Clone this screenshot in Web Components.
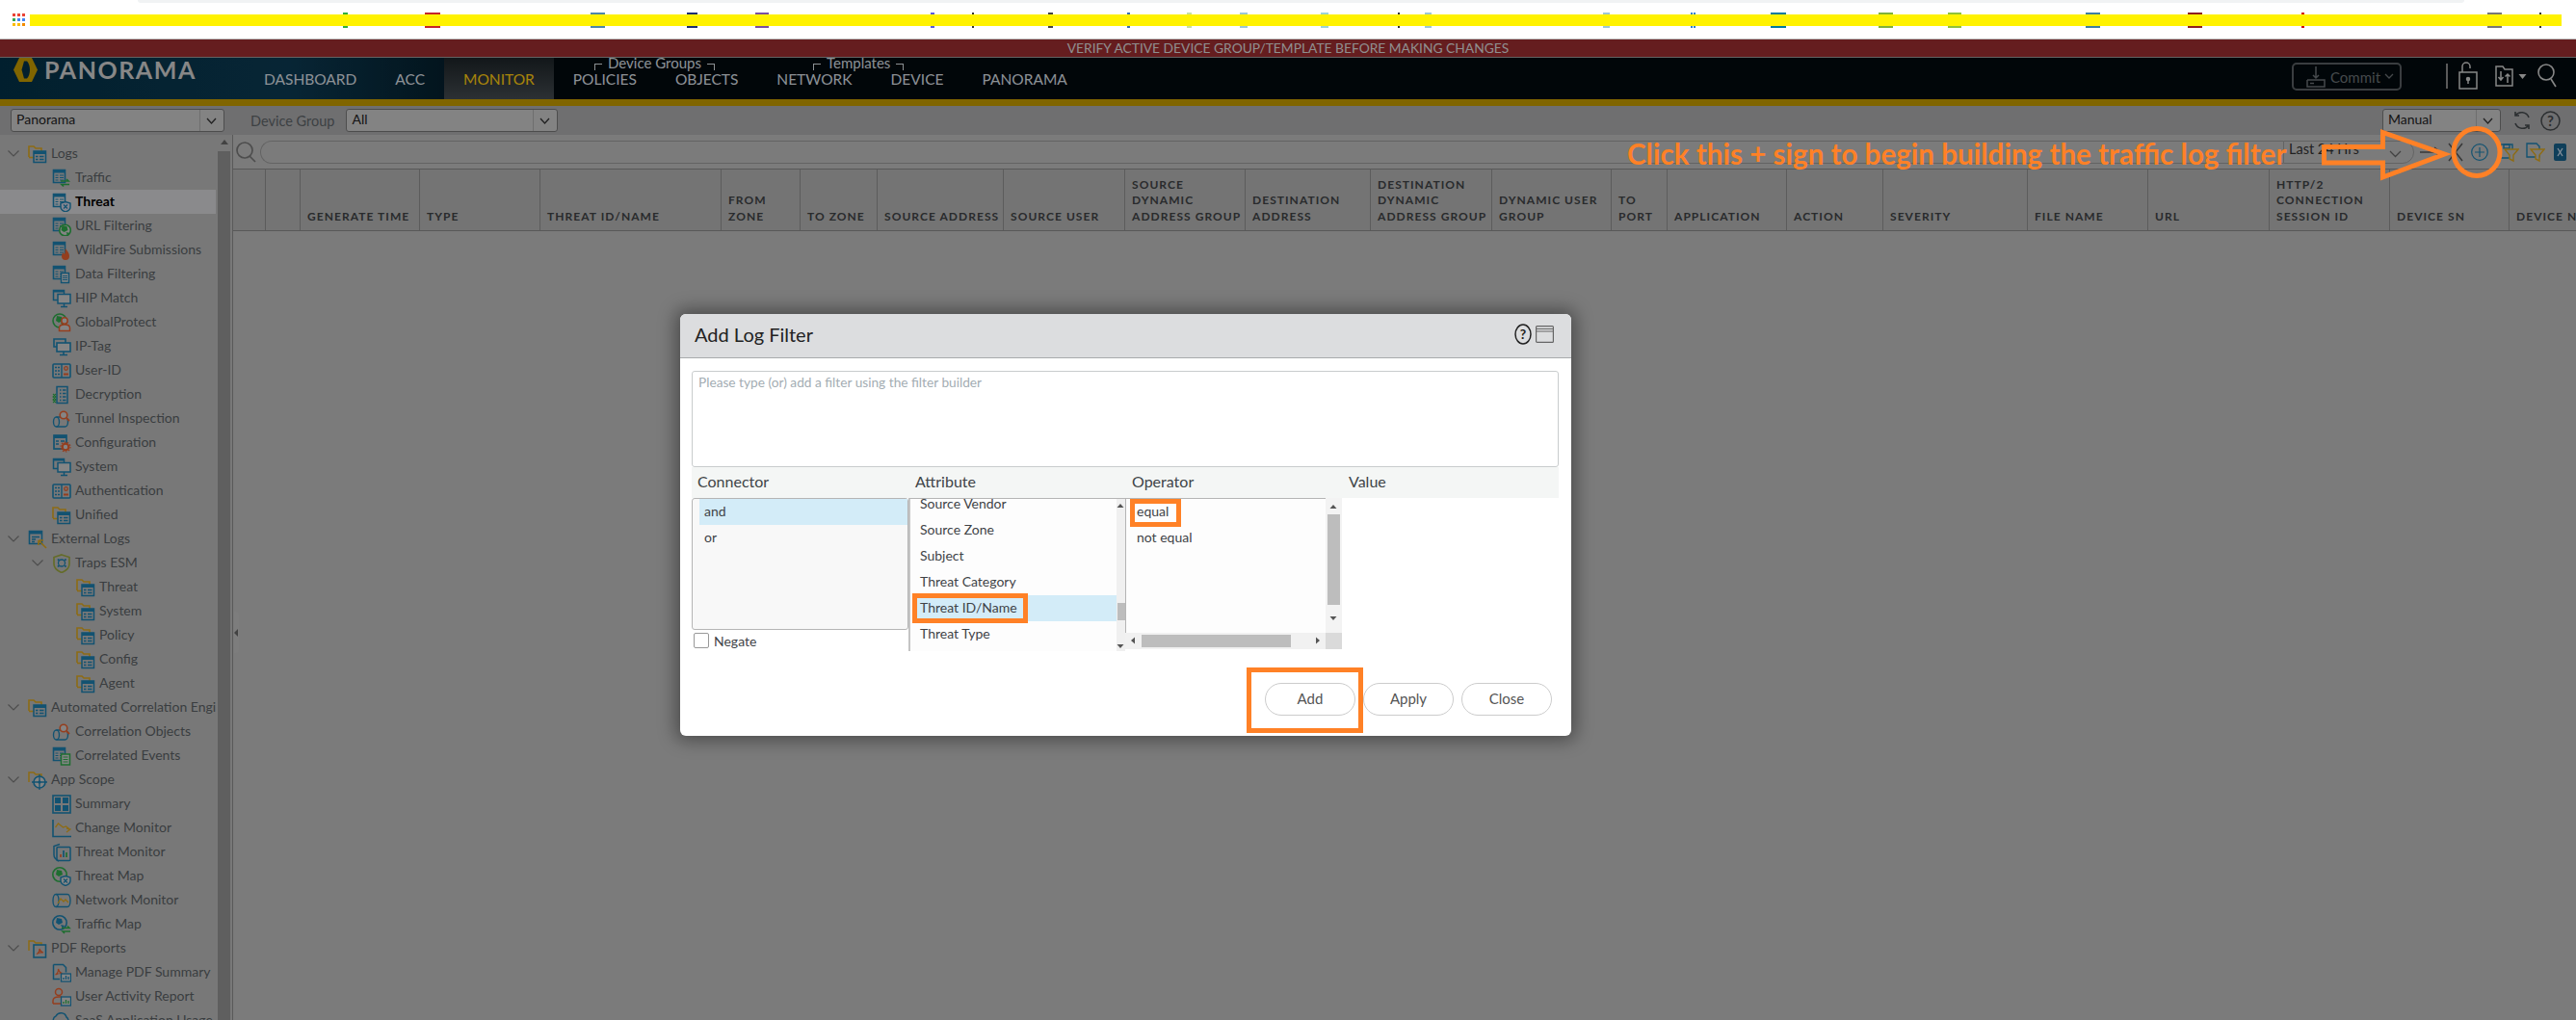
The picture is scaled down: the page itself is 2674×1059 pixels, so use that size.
<!DOCTYPE html>
<html lang="en"><head><meta charset="utf-8"><title>Panorama</title>
<style>
html,body{margin:0;padding:0;height:100%;overflow:hidden;background:#fff;font-family:Lato,"Liberation Sans",sans-serif}
pan-app{display:block;width:2674px;height:1059px}
</style></head><body>
<pan-app></pan-app>
<script>
const B='#1d7fae',G='#d9a520',GR='#2fa84a',O='#e4602f',D='#14516f';
const doc=`<path d="M1.5 1.5h12v13h-12z" fill="none" stroke="${B}" stroke-width="1.6"/><path d="M1.5 1.5h12v3h-12z" fill="${B}"/><path d="M3.5 7h3M3.5 9.500h3M3.500 12h3M8 7h4M8 9.500h4M8 12h4" stroke="${B}" stroke-width="1.200"/>`;
const folder=`<path d="M1 13V2h5l2 2h6v3" fill="none" stroke="${G}" stroke-width="1.600"/><path d="M1 13.500h5" stroke="${G}" stroke-width="1.600"/><rect x="6" y="7" width="12.500" height="11.500" fill="none" stroke="${B}" stroke-width="1.500"/><path d="M6 7h12.500v3H6z" fill="${B}"/><path d="M8 12.500h2.500M8 15.500h2.500M12 12.500h4.500M12 15.500h4.500" stroke="${B}" stroke-width="1.300"/>`;
const monitors=`<path d="M1.500 1.500h11v10h-11z" fill="none" stroke="${B}" stroke-width="1.500"/><path d="M1.500 1.500h11v2h-11z" fill="${B}"/><rect x="6" y="5.500" width="13" height="9.500" fill="#ccc" stroke="${B}" stroke-width="1.500"/><path d="M12.500 15v3M9 18.500h7" stroke="${B}" stroke-width="1.500"/>`;
const cyl=`<ellipse cx="4.500" cy="13" rx="3" ry="5" fill="none" stroke="${B}" stroke-width="1.400"/><path d="M4.500 8h9a3 5 0 0 1 0 10h-9" fill="none" stroke="${B}" stroke-width="1.400"/>`;
const mag=`<circle cx="12" cy="6" r="3.800" fill="#ccc" stroke="${O}" stroke-width="1.600"/><path d="M15 9l3 3" stroke="${O}" stroke-width="1.800"/>`;
const globe=(c,x=8,y=8,r=7)=>`<circle cx="${x}" cy="${y}" r="${r}" fill="none" stroke="${c}" stroke-width="1.600"/><path d="M${x-3} ${y-5}l5 1 1 4-4 2-3-2zM${x+1} ${y+2}l4 1-2 3z" fill="${c}"/>`;
const ICONS={
traffic:doc+`<path d="M9 13h8l-2-2M18 16.500h-8l2 2" fill="none" stroke="${GR}" stroke-width="1.700"/>`,
threat:doc+`<path d="M9 11l5-1.500 5 1.500v4c0 2-2 4-5 5-3-1-5-3-5-5z" fill="#ccd" stroke="${B}" stroke-width="1.400"/><path d="M12 12.500l4 4M16 12.500l-4 4" stroke="${B}" stroke-width="1.200"/>`,
url:doc+globe(GR,13.500,14,5.800).replace('fill="none"','fill="#ccc"'),
wild:doc+`<path d="M14 8c1 2 4 4 4 8a4 4 0 0 1-8 0c0-2 1-3 2-4 0 1 .5 2 1 2 1-2 0-4 1-6z" fill="${O}"/>`,
data:doc+`<path d="M9.500 8.500h8v10h-8z" fill="#ccc" stroke="${B}" stroke-width="1.400"/><path d="M11 11.500h5M11 13.500h5M11 15.500h5" stroke="${B}" stroke-width="1.100"/>`,
hip:monitors,ip:`<path d="M2 2h12v8H2z" fill="none" stroke="${B}" stroke-width="1.600"/><rect x="5" y="6" width="14" height="9" fill="#ccc" stroke="${B}" stroke-width="1.600"/><path d="M12 15v3M8 18.500h8" stroke="${B}" stroke-width="1.600"/>`,
gp:globe(GR,8,8,7)+`<circle cx="13" cy="8" r="3.200" fill="#ccc" stroke="${O}" stroke-width="1.500"/><path d="M7.500 18.500v-3c0-2 2-3.500 5.500-3.500s5.500 1.500 5.500 3.500v3z" fill="#ccc" stroke="${O}" stroke-width="1.500"/>`,
user:`<rect x="1" y="3" width="18" height="14" rx="1" fill="none" stroke="${B}" stroke-width="1.600"/><path d="M10 3v14" stroke="${B}" stroke-width="1.400"/><path d="M3 6.500h2M6 6.500h2M3 10h2M6 10h2M3 13.500h2M6 13.500h2" stroke="${B}" stroke-width="1.500"/><circle cx="14.500" cy="7.500" r="1.800" fill="none" stroke="${O}" stroke-width="1.300"/><path d="M12 14.500v-2h5v2z" fill="${O}"/>`,
dec:`<path d="M5 1.500h11v17H5z" fill="none" stroke="${B}" stroke-width="1.500"/><path d="M8 5h1.500M11 5h3.500M8 8.500h1.500M11 8.500h3.500M8 12h1.500M11 12h3.500M8 15.500h1.500M11 15.500h3.500" stroke="${B}" stroke-width="1.300"/><path d="M1 9l3 3-3 3 3 3M4 9l-3 3 3 3-3 3" fill="none" stroke="${GR}" stroke-width="1.100"/>`,
tunnel:cyl+mag,
conf:`<rect x="2" y="2" width="13" height="14" fill="none" stroke="${B}" stroke-width="1.700"/><path d="M2 2h13v3H2z" fill="${B}"/><path d="M4 8h3M4 11h3M9 8h4" stroke="${B}" stroke-width="1.300"/><circle cx="14" cy="14" r="3.300" fill="#ccc" stroke="${O}" stroke-width="2.200"/><circle cx="14" cy="14" r="5" fill="none" stroke="${O}" stroke-width="1.200" stroke-dasharray="1.500 1.600"/>`,
ext:`<path d="M1.500 1.500h13v13h-13z" fill="none" stroke="${B}" stroke-width="1.600"/><path d="M1.500 1.500h13v3h-13z" fill="${B}"/><path d="M4 7.500h8M4 10h4M4 12.500h3" stroke="${B}" stroke-width="1.300"/><path d="M19 19l-8-8M11 11v5M11 11h5" fill="none" stroke="${G}" stroke-width="1.700"/>`,
traps:`<path d="M10 1l8 2.500v7c0 4-3 7-8 9-5-2-8-5-8-9v-7z" fill="none" stroke="#9aa640" stroke-width="1.700"/><path d="M6.500 7v-1h1M13 6h1v1M14 12v1h-1M7.500 13h-1v-1" fill="none" stroke="${B}" stroke-width="1.500"/><circle cx="10" cy="9.500" r="3.500" fill="none" stroke="${B}" stroke-width="1.300"/>`,
folder,
corrd:doc+`<path d="M9.500 8h9v11h-9z" fill="#ccc" stroke="${GR}" stroke-width="1.500"/><path d="M11.500 11h5M11.500 13.500h5M11.500 16h5" stroke="${GR}" stroke-width="1.100"/>`,
scope:`<path d="M1 12V2h5l2 2h6v2" fill="none" stroke="${G}" stroke-width="1.500"/><circle cx="12" cy="12" r="6" fill="#ccc" stroke="${B}" stroke-width="1.600"/><path d="M12 4v16M4 12h16" stroke="${B}" stroke-width="1.300"/><circle cx="12" cy="12" r="1.600" fill="${B}"/>`,
summary:`<rect x="1" y="1" width="18" height="18" fill="none" stroke="${B}" stroke-width="1.600"/><path d="M3 3h6v6H3zM11 3h6v6h-6zM3 11h6v6H3zM11 11h6v6h-6z" fill="${B}"/>`,
change:`<path d="M1 1v17.500h19" fill="none" stroke="${B}" stroke-width="1.600"/><path d="M3.500 9l3-4 5 4 3-1 4 3M15 14l4-3-4-1" fill="none" stroke="${G}" stroke-width="1.300"/>`,
tmon:`<path d="M8 1.500l-6 2v9c0 3 2 5 5 6.500" fill="none" stroke="${B}" stroke-width="1.500"/><rect x="5" y="4.500" width="14" height="14" rx="1" fill="none" stroke="${B}" stroke-width="1.500"/><path d="M9 15v-3" stroke="${O}" stroke-width="1.700"/><path d="M12 15V8" stroke="${B}" stroke-width="1.700"/><path d="M15 15v-5" stroke="${GR}" stroke-width="1.700"/>`,
tmap:globe(GR,8,8,7.200)+`<path d="M9 11l5-1.500 5 1.500v3.500c0 2-2 4-5 5-3-1-5-3-5-5z" fill="#ccc" stroke="${B}" stroke-width="1.400"/><path d="M12 12.500l4 4M16 12.500l-4 4" stroke="${B}" stroke-width="1.200"/>`,
nmon:`<ellipse cx="4" cy="10" rx="3" ry="6.500" fill="none" stroke="${B}" stroke-width="1.400"/><path d="M4 3.500h12a3 6.500 0 0 1 0 13H4" fill="none" stroke="${B}" stroke-width="1.400"/><path d="M6 13l3-5 3 3 2-2 3 3" fill="none" stroke="${G}" stroke-width="1.300"/>`,
tfmap:globe(B,8,8,7.200)+`<path d="M10 13.500h8l-2-2M19 17h-8l2 2" fill="none" stroke="${GR}" stroke-width="1.600"/>`,
pdf:`<path d="M1 12V2h5l2 2h6v2" fill="none" stroke="${G}" stroke-width="1.500"/><rect x="6" y="6" width="12.500" height="13" fill="none" stroke="${B}" stroke-width="1.600"/><path d="M9 15.500c2-1 3-3.500 3-5.500 .5 2 1.500 3.500 4 4-2-.2-5 .3-7 1.500z" fill="none" stroke="${O}" stroke-width="1.200"/>`,
mpdf:`<path d="M1.500 1.500h10l3 3v5M1.500 1.500v15H8" fill="none" stroke="${B}" stroke-width="1.500"/><path d="M3.500 12c2-1 3-3 3-6 .5 2 1.500 4 4 4.500-2 0-5 .5-7 1.500z" fill="none" stroke="${O}" stroke-width="1.200"/><rect x="9.500" y="11" width="10" height="8" fill="#ccc" stroke="${B}" stroke-width="1.300"/><path d="M12 17v-2M14.500 17v-4M17 17v-3" stroke="${B}" stroke-width="1.300"/>`,
uar:`<circle cx="7" cy="5" r="3.500" fill="none" stroke="${O}" stroke-width="1.500"/><path d="M1 17v-3c0-2 2-4 6-4h3" fill="none" stroke="${O}" stroke-width="1.500"/><path d="M1 17h8" stroke="${O}" stroke-width="1.500"/><rect x="9.500" y="10" width="10" height="9" fill="#ccc" stroke="${B}" stroke-width="1.300"/><path d="M12 17v-2M14.500 17v-4M17 17v-3" stroke="${GR}" stroke-width="1.300"/>`,
saas:`<path d="M3 12a4 4 0 0 1 1-7 6 6 0 0 1 11 1 4 4 0 0 1 1 6z" fill="none" stroke="${B}" stroke-width="1.500"/>`
};
class PanIcon extends HTMLElement{constructor(){super();const s=this.attachShadow({mode:'open'});
 s.innerHTML=`<style>:host{display:inline-block;width:20px;height:20px;flex:none}svg{display:block;width:100%;height:100%}</style><svg viewBox="0 0 20 20">${ICONS[this.getAttribute('name')]||''}</svg>`}}
customElements.define('pan-icon',PanIcon);

class PanBookmarks extends HTMLElement{constructor(){super();const s=this.attachShadow({mode:'open'});
 const bits=[[356,5,'#2fae3f'],[441,16,'#c4262a'],[613,15,'#4d86a8'],[713,11,'#1d2f6f'],[784,14,'#7a4fa0'],[966,4,'#5a5ae0'],[1009,2,'#333'],[1088,5,'#444'],[1170,3,'#3a6fb0'],[1232,5,'#c6e0a0'],[1287,8,'#9cc7d5'],[1371,8,'#9cd3d5'],[1451,2,'#333'],[1479,7,'#9cc7d5'],[1664,7,'#9cc7d5'],[1755,2,'#2b7fd0'],[1758,2,'#2b7fd0'],[1838,16,'#007a9c'],[1950,15,'#7fb13a'],[2022,14,'#8fc13a'],[2165,15,'#3e7ea0'],[2271,15,'#8e2020'],[2389,3,'#d01010'],[2582,15,'#777'],[2636,2,'#333']];
 let x=0,h='';for(const [l,w,c] of bits){h+=`<i style="margin-left:${l-x}px;width:${w}px;background:${c}"></i>`;x=l+w}
 s.innerHTML=`<style>
 :host{display:block;height:41px;background:#fff;box-sizing:border-box;border-bottom:1px solid #bdbdbd;position:relative}
 .top{height:3px;margin:0 116px 0 143px;background:#f1f3f4;border-radius:0 0 6px 6px}
 .bits{display:flex;position:absolute;left:0;top:13px;height:16px}.bits i{display:block;height:16px;flex:none}
 .bar{position:absolute;left:31px;top:15px;width:2628px;height:12px;background:#fff200}
 .apps{position:absolute;left:13px;top:14px;display:grid;grid-template-columns:repeat(3,3px);gap:2px}
 .apps b{width:3px;height:3px;display:block}
 </style><div class="top"></div><div class="bits">${h}</div><div class="bar"></div>
 <div class="apps">${['#ea4335','#ea4335','#ea4335','#34a853','#4285f4','#4285f4','#fbbc05','#fbbc05','#f28b00'].map(c=>`<b style="background:${c}"></b>`).join('')}</div>`}}
customElements.define('pan-bookmarks',PanBookmarks);

class PanNav extends HTMLElement{constructor(){super();const s=this.attachShadow({mode:'open'});
 const tabs=['DASHBOARD','ACC','MONITOR','POLICIES','OBJECTS','NETWORK','DEVICE','PANORAMA'];
 s.innerHTML=`<style>
 :host{display:block;color:#d8dfe4;font-family:Lato,sans-serif}
 .banner{height:18px;background:#9c2d31;color:#dcdcdc;text-align:center;font-size:13.800px;line-height:18px;box-sizing:border-box}
 .sep{height:1px;background:#999}
 .row{height:43px;display:flex;background:linear-gradient(90deg,#033147 0,#0c3a52 300px,#05202e 461px,#020a0e 575px,#020a0e);position:relative}
 .logo{width:254px;display:flex;gap:7px;padding-left:14px;box-sizing:border-box;align-items:flex-start}
 .logo svg{flex:none}
 .logo span{font-weight:700;font-size:25px;letter-spacing:1.550px;line-height:24px;color:#cfcfcf;margin-top:0}
 .tab{padding:0 20px;font-size:15.500px;line-height:44px;letter-spacing:0;position:relative}
 .tab.on{color:#ffcb10;background:linear-gradient(#1d2428,#444b50)}
 .grp{position:absolute;top:-1px;font-size:15px;line-height:13px;white-space:nowrap;color:#d8dfe4}
 .grp i{display:inline-block;width:7px;height:6px;border:1px solid #d8dfe4;border-width:1px 0 0 1px;vertical-align:-2px;margin-right:6px}
 .grp i.r{border-width:1px 1px 0 0;margin:0 0 0 6px}
 .spacer{flex:1}
 .commit{width:114px;height:29px;margin:5px 46px 0 0;border:2px solid #5a5f63;border-radius:5px;box-sizing:border-box;display:flex;align-items:center;gap:4px;padding-left:12px;color:#6b7175;font-size:15px}
 .tools{display:flex;align-items:center;height:38px;margin-right:20px;gap:0}
 .gold{height:7px;background:#c59b00}
 svg.i{display:block}
 </style>
 <div class="banner"><span>VERIFY ACTIVE DEVICE GROUP/TEMPLATE BEFORE MAKING CHANGES</span></div><div class="sep"></div>
 <div class="row">
  <div class="logo"><svg width="25" height="25" viewBox="0 0 25 25"><path fill-rule="evenodd" d="M6 0h13l6 12.500-6 12.500H6L0 12.500zM11 3.500l-2.500 9 2.500 9h3c2-2 3-5.500 3-9s-1-7-3-9z" fill="#c59b00"/></svg><span>PANORAMA</span></div>
  ${tabs.map(t=>`<div class="tab${t==='MONITOR'?' on':''}">${t}</div>`).join('')}
  <div class="grp" style="left:617px"><i></i>Device Groups<i class="r"></i></div>
  <div class="grp" style="left:844px"><i></i>Templates<i class="r"></i></div>
  <div class="spacer"></div>
  <div class="commit"><svg class="i" width="22" height="24" viewBox="0 0 22 24" fill="none" stroke="#6b7175" stroke-width="1.500"><path d="M11 1v12M8 10l3 3 3-3M2 15h7M13 15h7M2 15v7h18v-7H2M5 18.500h4"/></svg><span>Commit</span><svg class="i" width="10" height="7" viewBox="0 0 10 7" fill="none" stroke="#6b7175" stroke-width="1.300"><path d="M1 1l4 4 4-4"/></svg></div>
  <div class="tools">
   <svg class="i" width="2" height="26"><rect width="2" height="26" fill="#8a8a8a"/></svg>
   <svg class="i" style="margin-left:11px" width="20" height="30" viewBox="0 0 20 30" fill="none" stroke="#cfcfcf" stroke-width="1.500"><path d="M4 11V5a4 4 0 0 1 8 0v2"/><path d="M1 11h18v17H1z"/><circle cx="10" cy="18" r="1.500" fill="#cfcfcf"/><path d="M10 19v4"/></svg>
   <svg class="i" style="margin-left:18px" width="19" height="24" viewBox="0 0 19 24" fill="none" stroke="#cfcfcf" stroke-width="1.500"><path d="M1 2h7l2 3h8v17H1z"/><path d="M6 16V7M3.500 13L6 16l2.500-3M13 10v9M10.500 12.500L13 10l2.500 2.500"/></svg>
   <svg class="i" style="margin-left:5px" width="9" height="7" viewBox="0 0 9 7"><path d="M.5 1h8L4.500 6z" fill="#cfcfcf"/></svg>
   <svg class="i" style="margin-left:11px" width="20" height="28" viewBox="0 0 20 28" fill="none" stroke="#cfcfcf" stroke-width="1.600"><circle cx="9" cy="10" r="8"/><path d="M14 17l5 8"/></svg>
  </div>
 </div><div class="gold"></div>`}}
customElements.define('pan-nav',PanNav);

class PanSelect extends HTMLElement{constructor(){super();const s=this.attachShadow({mode:'open'});
 const w=this.getAttribute('w');s.innerHTML=`<style>
 :host{display:block;width:${w}px;height:24px;box-sizing:border-box;border:1px solid #777;border-radius:3px;background:#c9c9ca;font-size:14px;line-height:20px;color:#222;padding-left:5px;position:relative}
 i{position:absolute;right:0;top:0;bottom:0;width:24px;border-left:1px solid #aaa}
 svg{position:absolute;right:7px;top:8px}
 </style><span><slot></slot></span><i></i><svg width="11" height="8" viewBox="0 0 11 8" fill="none" stroke="#333" stroke-width="1.300"><path d="M1 1l4.500 5L10 1"/></svg>`}}
customElements.define('pan-select',PanSelect);

class PanToolbar extends HTMLElement{constructor(){super();const s=this.attachShadow({mode:'open'});
 s.innerHTML=`<style>
 :host{display:flex;align-items:center;height:30px;background:#ababad;padding:0 0 0 11px;box-sizing:border-box;font-size:14.500px;color:#5e6468;flex:none}
 .l{margin:0 12px 0 27px}.s{flex:1}
 svg{display:block}
 </style><pan-select w="222">Panorama</pan-select><span class="l">Device Group</span><pan-select w="220">All</pan-select><div class="s"></div>
 <pan-select w="123">Manual</pan-select>
 <svg style="margin-left:12px" width="20" height="22" viewBox="0 0 20 22" fill="none" stroke="#44494c" stroke-width="1.600"><path d="M17 8A8 8 0 0 0 3 6M3 2v4h4M3 14a8 8 0 0 0 14 2M17 20v-4h-4"/></svg>
 <svg style="margin:0 16px 0 9px" width="21" height="21" viewBox="0 0 21 21"><circle cx="10.500" cy="10.500" r="9.500" fill="none" stroke="#44494c" stroke-width="1.500"/><text x="10.500" y="16" text-anchor="middle" font-family="Lato" font-weight="700" font-size="15" fill="#44494c">?</text></svg>`}}
customElements.define('pan-toolbar',PanToolbar);

class PanTreeRow extends HTMLElement{constructor(){super();const s=this.attachShadow({mode:'open'});
 const lv=+this.getAttribute('lv')||0,open=this.hasAttribute('open'),sel=this.hasAttribute('sel');
 s.innerHTML=`<style>
 :host{display:flex;align-items:center;height:25px;flex:none;padding-left:${lv*25}px;font-size:14px;color:${sel?'#000':'#5a5f63'};font-weight:${sel?700:400};background:${sel?'#d4d5d7':'transparent'};white-space:nowrap;overflow:hidden}
 .c{width:29px;flex:none;padding-left:8px;box-sizing:border-box}
 svg{display:block}pan-icon{margin-right:4px}
 span{position:relative;top:-1px}
 </style><div class="c">${open?'<svg width="12" height="7" viewBox="0 0 12 7" fill="none" stroke="#777" stroke-width="1.200"><path d="M.5.5L6 6 11.500.5"/></svg>':''}</div><pan-icon name="${this.getAttribute('i')}"></pan-icon><span><slot></slot></span>`}}
customElements.define('pan-tree-row',PanTreeRow);

class PanTree extends HTMLElement{constructor(){super();const s=this.attachShadow({mode:'open'});
 s.innerHTML=`<style>
 :host{display:flex;width:242px;flex:none;background:#b9b9b9;box-sizing:border-box;border-right:1px solid #8a8a8a;overflow:hidden}
 .list{width:224px;flex:none;padding-top:7px;display:flex;flex-direction:column;overflow:hidden}
 .sb{width:13px;margin-left:2px;flex:none;position:relative;padding-top:17px;box-sizing:border-box}
 .sb i{display:block;height:100%;background:#929292}
 .sb b{position:absolute;left:3px;top:5px;border:4px solid transparent;border-top:0;border-bottom:5px solid #666}
 </style><div class="list"><slot></slot></div><div class="sb"><b></b><i></i></div>`}}
customElements.define('pan-tree',PanTree);

class PanGrid extends HTMLElement{constructor(){super();const s=this.attachShadow({mode:'open'});
 const cols=[[34,''],[36,''],[124,'GENERATE TIME'],[125,'TYPE'],[188,'THREAT ID/NAME'],[82,'FROM|ZONE'],[80,'TO ZONE'],[131,'SOURCE ADDRESS'],[126,'SOURCE USER'],[125,'SOURCE|DYNAMIC|ADDRESS GROUP'],[130,'DESTINATION|ADDRESS'],[126,'DESTINATION|DYNAMIC|ADDRESS GROUP'],[124,'DYNAMIC USER|GROUP'],[58,'TO|PORT'],[124,'APPLICATION'],[100,'ACTION'],[150,'SEVERITY'],[125,'FILE NAME'],[126,'URL'],[125,'HTTP/2|CONNECTION|SESSION ID'],[124,'DEVICE SN'],[125,'DEVICE NAME']];
 s.innerHTML=`<style>
 :host{flex:1;min-width:0;display:flex;flex-direction:column;background:#bdbdbd;overflow:hidden;position:relative}
 .search{height:35px;display:flex;align-items:center;padding-left:3px;flex:none;background:#bebebe}
 .inp{width:2100px;margin-left:3px;height:24px;box-sizing:border-box;border:1px solid #999;border-right:0;border-radius:12px 0 0 12px;flex:none}
 .rng{width:136px;height:24px;box-sizing:border-box;border:1px solid #999;border-left:1px solid #999;border-radius:0 12px 12px 0;font-size:14.500px;line-height:16px;padding-left:5px;color:#333;position:relative;flex:none}
 .rng svg{position:absolute;right:12px;top:9px}
 svg{display:block;flex:none}
 .head{display:flex;height:65px;flex:none;border-top:1px solid #888;border-bottom:1px solid #888;box-sizing:border-box;background:#b2b2b2;width:2600px}
 .c{flex:none;box-sizing:border-box;border-right:1px solid #8e8e8e;padding:0 0 6px 7px;display:flex;align-items:flex-end;font-size:12px;line-height:16.500px;font-weight:700;letter-spacing:1.050px;color:#3f4245;white-space:nowrap}
 .c:last-child{border-right:0}
 .handle{position:absolute;left:1px;top:495px;width:5px;height:43px;background:#c0c0c0;border-radius:0 3px 3px 0}
 .handle i{position:absolute;left:0;top:18px;border:4px solid transparent;border-left:0;border-right:4px solid #666}
 </style>
 <div class="search"><svg width="22" height="24" viewBox="0 0 22 24" fill="none" stroke="#777" stroke-width="1.700"><circle cx="9" cy="10" r="8"/><path d="M14 16l6 6"/></svg><div class="inp"></div><div class="rng">Last 24 Hrs<svg width="13" height="8" viewBox="0 0 13 8" fill="none" stroke="#666" stroke-width="1.300"><path d="M1 1l5.500 5.500L12 1"/></svg></div>
  <svg style="margin-left:6px" width="22" height="12" viewBox="0 0 22 12" fill="none" stroke="#555" stroke-width="1.500"><path d="M0 6h21M15 1l6 5-6 5"/></svg>
  <svg style="margin-left:7px" width="16" height="20" viewBox="0 0 16 20" fill="none" stroke="#555" stroke-width="1.500"><path d="M1 1l14 18M15 1L1 19"/></svg>
  <svg style="margin-left:8px" width="18" height="18" viewBox="0 0 18 18" fill="none" stroke="#1d7fae" stroke-width="1.200"><circle cx="9" cy="9" r="8.300"/><path d="M9 4v10M4 9h10"/></svg>
  <svg style="margin-left:12px" width="20" height="22" viewBox="0 0 20 22" fill="none" stroke-width="1.400"><path d="M1 3h12v14H1z" stroke="#1d7fae"/><path d="M4 3h6v4H4z" stroke="#1d7fae"/><path d="M5 8h14l-5 6v6l-4-2v-4z" stroke="#d9a520" fill="#bebebe"/></svg>
  <svg style="margin-left:7px" width="20" height="22" viewBox="0 0 20 22" fill="none" stroke-width="1.400"><path d="M1 2h10l3 3v11H1z" stroke="#1d7fae"/><path d="M5 8h14l-5 6v6l-4-2v-4z" stroke="#d9a520" fill="#bebebe"/></svg>
  <svg style="margin-left:9px" width="13" height="18" viewBox="0 0 13 18"><rect width="13" height="18" rx="2" fill="#17618a"/><path d="M4 5l5 8M9 5l-5 8" stroke="#cde" stroke-width="1.300"/></svg>
 </div>
 <div class="head">${cols.map(([w,t])=>`<div class="c" style="width:${w}px"><div>${t.split('|').join('<br>')}</div></div>`).join('')}</div>
 <div class="handle"><i></i></div>`}}
customElements.define('pan-grid',PanGrid);

class PanList extends HTMLElement{constructor(){super();const s=this.attachShadow({mode:'open'});
 s.innerHTML=`<style>:host{display:block}
 .r{height:27px;line-height:26px;font-size:14px;color:#3f4347;padding-left:${this.getAttribute('pl')||5}px;box-sizing:border-box}
 .r.on{background:#d3ecf8}
 </style>${(this.getAttribute('items')||'').split('|').map((t,i)=>`<div class="r${i==+this.getAttribute('on')?' on':''}">${t}</div>`).join('')}`}}
customElements.define('pan-list',PanList);

class PanDialog extends HTMLElement{constructor(){super();const s=this.attachShadow({mode:'open'});
 const tri=(d,st)=>`<svg style="position:absolute;${st}" width="8" height="8" viewBox="0 0 8 8"><path d="${d}" fill="#555"/></svg>`;
 const UP='M4 2l3.500 4H.5z',DN='M.5 2h7L4 6z',LF='M2 4l4-3.500v7z',RT='M6 4L2 .5v7z';
 s.innerHTML=`<style>
 :host{position:absolute;left:706px;top:285px;width:925px;height:438px;background:#fff;border-radius:6px;box-shadow:0 0 18px 5px rgba(0,0,0,.38);font-family:Lato,sans-serif;display:block;overflow:hidden;color:#3f4347}
 .h{height:46px;background:#dcdddf;border-bottom:1px solid #a8aaad;box-sizing:border-box;display:flex;align-items:center;padding:0 18px 3px 15px;font-size:20px;color:#222}
 .h span{flex:1}svg{display:block}
 .b{padding:13px 13px 0 12px}
 .ta{height:100px;box-sizing:border-box;border:1px solid #c9cccd;border-radius:3px;font-size:13.700px;line-height:18px;color:#a3adb3;padding:2px 6px}
 .cols{display:grid;grid-template-columns:repeat(4,225px);height:32px;background:#f4f6f5;font-size:16px;line-height:29px;color:#404447}
 .cols div{padding-left:6px}.cols div+div{padding-left:7px}
 .lists{display:flex;height:159px;font-size:14px}
 .col{width:225px;flex:none;box-sizing:border-box;position:relative;overflow:hidden}
 .conn{height:137px;background:#f8f8f8;border:1px solid #b5b5b5;border-radius:3px;padding-left:7px;box-sizing:border-box}
 .neg{display:flex;align-items:center;height:22px;gap:5px;padding-left:2px;font-size:14px}
 .neg i{width:16px;height:16px;border:1px solid #999;border-radius:2px;box-sizing:border-box}
 .attr{border-left:2px solid #c4c4c4;border-top:1px solid #b5b5b5;background:#fdfdfd;padding-left:5px;display:flex}
 .attr .in{flex:1;margin-top:-8px;overflow:hidden}
 .attr .bar{width:9px;background:#f0f0f0;position:relative;flex:none}
 .attr .bar b{position:absolute;left:1px;right:0;top:108px;height:18px;background:#bdbdbd}
 .op{display:flex;flex-direction:column}
 .op .top{display:flex;height:140px;flex:none}
 .op .in{flex:1;border-left:1px solid #b5b5b5;border-top:1px solid #b5b5b5;background:#fdfdfd;padding-left:6px;box-sizing:border-box}
 .vb{width:17px;background:#f3f3f3;position:relative;padding:17px 2px 29px;box-sizing:border-box}
 .vb b{display:block;height:94px;background:#bdbdbd}
 .hb{height:17px;display:flex;background:#f1f1f1;padding-left:17px;box-sizing:border-box;position:relative}
 .hb b{width:155px;height:13px;margin-top:2px;background:#bdbdbd}.hb u{margin-left:auto;width:17px;background:#dadada}
 .btns{display:flex;justify-content:flex-end;gap:8px;margin-top:33px;padding-right:7px}
 .btn{width:94px;height:34px;border:1px solid #ccc;border-radius:17px;box-sizing:border-box;text-align:center;font-size:15px;line-height:31px;color:#555}
 </style>
 <div class="h"><span>Add Log Filter</span>
  <svg width="18" height="22" viewBox="0 0 18 22"><ellipse cx="9" cy="11" rx="8" ry="10" fill="none" stroke="#222" stroke-width="1.500"/><text x="9" y="16" text-anchor="middle" font-family="Lato" font-weight="700" font-size="14" fill="#222">?</text></svg>
  <svg style="margin-left:4px" width="19" height="18" viewBox="0 0 19 18" fill="none" stroke="#666" stroke-width="1.200"><rect x=".6" y=".6" width="17.800" height="16.800" rx="1"/><path d="M1 3.500h17M1 6h17"/></svg></div>
 <div class="b"><div class="ta">Please type (or) add a filter using the filter builder</div>
 <div class="cols"><div>Connector</div><div>Attribute</div><div>Operator</div><div>Value</div></div>
 <div class="lists">
  <div class="col"><div class="conn"><pan-list pl="5" items="and|or" on="0"></pan-list></div><div class="neg"><i></i>Negate</div></div>
  <div class="col attr"><div class="in"><pan-list pl="5" on="4" items="Source Vendor|Source Zone|Subject|Threat Category|Threat ID/Name|Threat Type"></pan-list></div><div class="bar"><b></b>${tri(UP,'left:0;top:3px')}${tri(DN,'left:0;bottom:1px')}</div></div>
  <div class="col op"><div class="top"><div class="in"><pan-list pl="5" items="equal|not equal" on="9"></pan-list></div><div class="vb"><b></b>${tri(UP,'left:4px;top:5px')}${tri(DN,'left:4px;bottom:11px')}</div></div><div class="hb"><b></b><u></u>${tri(LF,'left:4px;top:4px')}${tri(RT,'right:21px;top:4px')}</div></div>
 </div>
 <div class="btns"><div class="btn">Add</div><div class="btn">Apply</div><div class="btn">Close</div></div></div>`}}
customElements.define('pan-dialog',PanDialog);

class PanMarks extends HTMLElement{constructor(){super();const s=this.attachShadow({mode:'open'});
 s.innerHTML=`<style>
 :host{position:absolute;left:0;top:0;width:2674px;height:1059px;pointer-events:none;display:block}
 svg{position:absolute;left:0;top:0}
 .t{position:absolute;left:1689px;top:143px;font:700 29.600px/34px Lato,sans-serif;color:#ff8126;white-space:nowrap}
 </style>
 <svg width="2674" height="1059" fill="none" stroke="#ff8126" stroke-width="5">
 <rect x="949.500" y="618.500" width="115" height="26"/>
 <rect x="1175.500" y="520.500" width="48" height="24"/>
 <rect x="1296.500" y="695.500" width="116" height="63"/>
 <path d="M2412.500 152.500h61v-15l64 22.500-64 24v-15h-61z"/>
 <ellipse cx="2571" cy="158" rx="24" ry="24.500"/>
 </svg><div class="t">Click this + sign to begin building the traffic log filter</div>`}}
customElements.define('pan-marks',PanMarks);

const TREE=[[0,'folder','Logs',1],[1,'traffic','Traffic'],[1,'threat','Threat',0,1],[1,'url','URL Filtering'],[1,'wild','WildFire Submissions'],[1,'data','Data Filtering'],[1,'hip','HIP Match'],[1,'gp','GlobalProtect'],[1,'ip','IP-Tag'],[1,'user','User-ID'],[1,'dec','Decryption'],[1,'tunnel','Tunnel Inspection'],[1,'conf','Configuration'],[1,'hip','System'],[1,'user','Authentication'],[1,'folder','Unified'],[0,'ext','External Logs',1],[1,'traps','Traps ESM',1],[2,'folder','Threat'],[2,'folder','System'],[2,'folder','Policy'],[2,'folder','Config'],[2,'folder','Agent'],[0,'folder','Automated Correlation Engine',1],[1,'tunnel','Correlation Objects'],[1,'corrd','Correlated Events'],[0,'scope','App Scope',1],[1,'summary','Summary'],[1,'change','Change Monitor'],[1,'tmon','Threat Monitor'],[1,'tmap','Threat Map'],[1,'nmon','Network Monitor'],[1,'tfmap','Traffic Map'],[0,'pdf','PDF Reports',1],[1,'mpdf','Manage PDF Summary'],[1,'uar','User Activity Report'],[1,'saas','SaaS Application Usage']];
class PanApp extends HTMLElement{constructor(){super();const s=this.attachShadow({mode:'open'});
 s.innerHTML=`<style>
 :host{display:flex;flex-direction:column;position:relative;overflow:hidden;font-family:Lato,sans-serif}
 .stage{flex:1;min-height:0;position:relative;display:flex;flex-direction:column}
 .main{flex:1;min-height:0;display:flex}
 .mask{position:absolute;inset:0;background:rgba(0,0,0,.35)}
 </style><pan-bookmarks></pan-bookmarks>
 <div class="stage"><pan-nav></pan-nav><pan-toolbar></pan-toolbar>
 <div class="main"><pan-tree>${TREE.map(([l,i,t,o,se])=>`<pan-tree-row lv="${l}" i="${i}"${o?' open':''}${se?' sel':''}>${t}</pan-tree-row>`).join('')}</pan-tree><pan-grid></pan-grid></div>
 <div class="mask"></div><pan-dialog></pan-dialog></div><pan-marks></pan-marks>`}}
customElements.define('pan-app',PanApp);
</script></body></html>
